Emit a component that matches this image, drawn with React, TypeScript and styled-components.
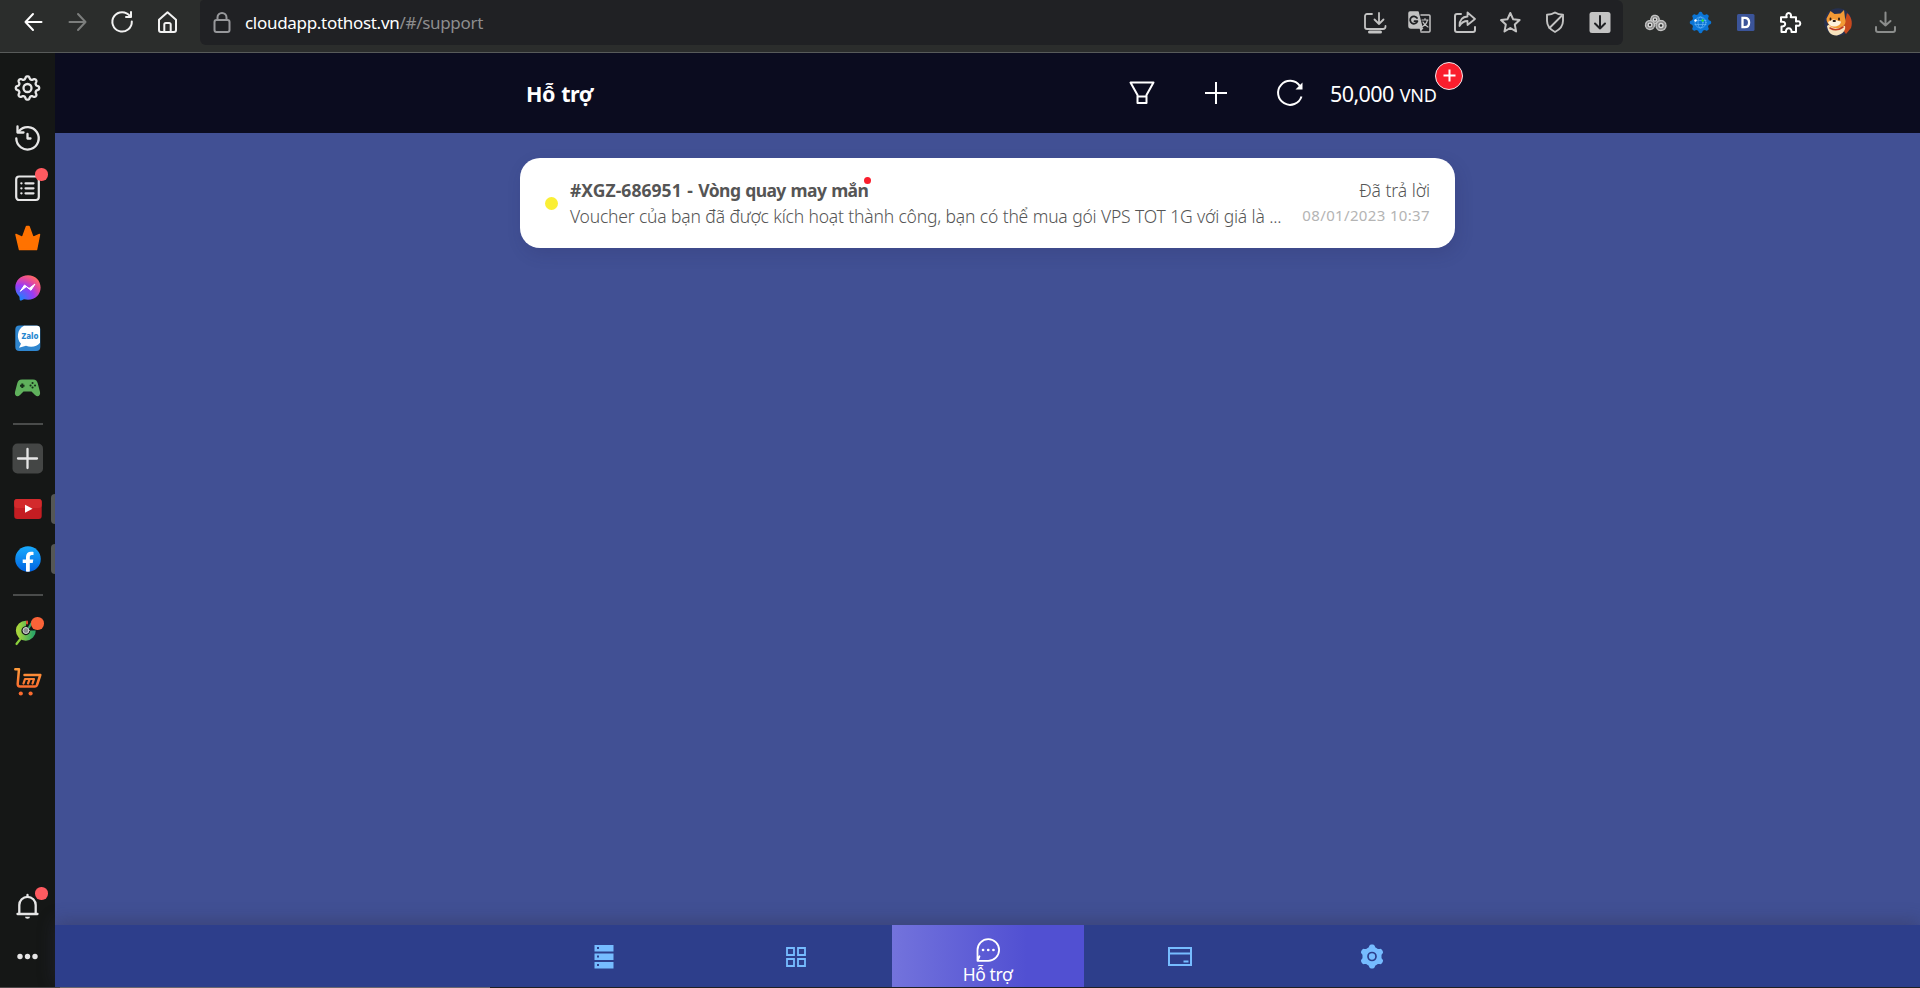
import React from 'react';
import styled, { createGlobalStyle } from 'styled-components';

const Global = createGlobalStyle`
  * { box-sizing: border-box; }
  html, body { margin: 0; padding: 0; overflow: hidden; background: #415094; }
  body { font-family: 'Noto Sans', 'Open Sans', sans-serif; }
`;

const gearPath = (cx: number, cy: number, teeth: number, outer: number, inner: number, sharp = 1.6) => {
  const pts: string[] = [];
  const steps = 144;
  for (let i = 0; i < steps; i++) {
    const a = (i / steps) * Math.PI * 2;
    const wave = Math.tanh(sharp * Math.cos(teeth * a)) / Math.tanh(sharp);
    const r = (outer + inner) / 2 + ((outer - inner) / 2) * wave;
    pts.push(`${(cx + r * Math.sin(a)).toFixed(2)} ${(cy - r * Math.cos(a)).toFixed(2)}`);
  }
  return `M${pts.join('L')}Z`;
};

const Window = styled.div`
  display: flex;
  flex-direction: column;
  width: 1920px;
  height: 988px;
`;

const Toolbar = styled.div`
  display: flex;
  align-items: flex-start;
  flex: none;
  height: 53px;
  padding-left: 11px;
  background: #2b2d2c;
  border-bottom: 1px solid #585b5a;
`;

const ToolGroup = styled.div`
  display: flex;
`;

const ToolButton = styled.div<{ $color?: string }>`
  display: flex;
  align-items: center;
  justify-content: center;
  width: 45px;
  height: 44px;
  color: ${(p) => p.$color || '#c3c3c3'};
`;

const Glyph = styled.svg`
  display: block;
  overflow: visible;
  fill: none;
  stroke-linecap: round;
  stroke-linejoin: round;
`;

const AddressBar = styled.div`
  display: flex;
  width: 1423px;
  height: 45px;
  margin: 0 10px 0 9px;
  background: #202124;
  border-radius: 4px 6px 6px 6px;
`;

const Url = styled.div`
  flex: 1;
  color: #8d8d8e;
  font-size: 17px;
  line-height: 46px;
  letter-spacing: -0.3px;
  span { color: #fff; }
`;

const Body = styled.div`
  display: flex;
  flex: 1;
  min-height: 0;
`;

const Sidebar = styled.div`
  display: flex;
  flex-direction: column;
  flex: none;
  width: 55px;
  padding: 10px 0 5px;
  background: #151716;
`;

const SideItem = styled.div<{ $tab?: boolean }>`
  position: relative;
  display: flex;
  align-items: center;
  justify-content: center;
  flex: none;
  height: 50px;
  color: #e6e6e6;
  ${(p) => p.$tab && `&::after {
    content: '';
    position: absolute;
    right: 0;
    top: 10px;
    width: 4px;
    height: 30px;
    background: #555756;
    border-radius: 4px 0 0 4px;
  }`}
`;

const Dot = styled.span<{ $color?: string; $inner?: boolean }>`
  position: absolute;
  top: ${(p) => (p.$inner ? 11.5 : 5)}px;
  left: ${(p) => (p.$inner ? 31 : 35)}px;
  width: 12.5px;
  height: 12.5px;
  border-radius: 50%;
  background: ${(p) => p.$color || '#ff5a60'};
`;

const Divider = styled.div`
  flex: none;
  width: 30px;
  height: 1.5px;
  margin: 10px 0 9.8px 13px;
  background: #4a4c4b;
`;

const Spacer = styled.div`
  flex: 1;
`;

const AppPane = styled.div`
  display: flex;
  flex-direction: column;
  flex: 1;
  background: #415094;
`;

const Header = styled.div`
  display: flex;
  justify-content: center;
  flex: none;
  height: 80px;
  background: #0b0c1f;
`;

const HeaderInner = styled.div`
  display: flex;
  align-items: center;
  width: 961px;
  padding: 0 29px 0 19px;
  color: #fff;
`;

const Title = styled.h1`
  flex: 1;
  margin: 0;
  font-size: 21.5px;
  font-weight: 700;
  line-height: 80px;
  letter-spacing: -0.45px;
  word-spacing: 1px;
  padding-top: 1px;
`;

const HeaderAction = styled.div`
  display: flex;
  align-items: center;
  justify-content: center;
  width: 74px;
`;

const Balance = styled.div`
  position: relative;
  width: 109px;
  margin-left: 3px;
  padding-top: 2px;
  font-size: 21.5px;
  line-height: 80px;
  white-space: nowrap;
  letter-spacing: -0.6px;
  word-spacing: 1px;
  small { font-size: 18px; letter-spacing: -0.2px; }
`;

const TopUp = styled.div`
  position: absolute;
  left: 105px;
  top: 10px;
  width: 28px;
  height: 28px;
  border: 1.5px solid #f3e9ec;
  border-radius: 50%;
  background: #fa1e2d;
  display: flex;
  align-items: center;
  justify-content: center;
`;

const Content = styled.div`
  flex: 1;
  padding: 25px 0 0;
`;

const Ticket = styled.div`
  display: flex;
  align-items: center;
  width: 935px;
  height: 90px;
  margin: 0 auto;
  padding: 0 25px;
  background: #fff;
  border-radius: 20px;
  box-shadow: 3px 6px 16px rgba(40, 40, 90, 0.18);
  color: #555;
`;

const Status = styled.span`
  flex: none;
  width: 13px;
  height: 13px;
  margin-right: 12px;
  border-radius: 50%;
  background: #faef35;
`;

const TicketMain = styled.div`
  flex: 1;
  min-width: 0;
`;

const Subject = styled.div`
  position: relative;
  width: 297px;
  font-size: 17.5px;
  font-weight: 700;
  line-height: 26px;
  white-space: nowrap;
  letter-spacing: -0.32px;
  word-spacing: 0.9px;
`;

const SubjectCode = styled.span`
  letter-spacing: 0.05px;
`;

const SubjectName = styled.span`
  letter-spacing: -0.6px;
`;

const Unread = styled.span`
  position: absolute;
  left: 293.5px;
  top: 0;
  width: 7px;
  height: 7px;
  border-radius: 50%;
  background: #fa1e2d;
`;

const Excerpt = styled.div`
  font-size: 17.5px;
  font-weight: 300;
  line-height: 26px;
  white-space: nowrap;
  letter-spacing: -0.23px;
  word-spacing: 0.35px;
`;

const TicketMeta = styled.div`
  flex: none;
  text-align: right;
`;

const State = styled.div`
  font-size: 17.5px;
  font-weight: 300;
  line-height: 26px;
  letter-spacing: -0.05px;
`;

const Time = styled.div`
  position: relative;
  top: -1px;
  color: #b4b4b4;
  font-size: 15px;
  line-height: 26px;
  letter-spacing: 0.35px;
`;

const BottomNav = styled.div`
  display: flex;
  justify-content: center;
  flex: none;
  height: 62px;
  padding-left: 1px;
  background: #2d3e8b;
  box-shadow: 0 -4px 16px rgba(50, 50, 80, 0.4);
`;

const NavItem = styled.div<{ $active?: boolean }>`
  display: flex;
  flex-direction: column;
  align-items: center;
  justify-content: ${(p) => (p.$active ? 'flex-start' : 'center')};
  width: 192px;
  padding-top: ${(p) => (p.$active ? 13 : 1)}px;
  color: ${(p) => (p.$active ? '#fff' : '#76bcff')};
  background: ${(p) => (p.$active ? 'linear-gradient(90deg, #7373dc, #5150d2 70%)' : 'none')};
`;

const NavLabel = styled.div`
  padding-right: 1px;
  font-size: 17.5px;
  line-height: 24px;
  letter-spacing: -0.4px;
`;

const Edge = styled.div`
  flex: none;
  height: 1px;
  background: linear-gradient(90deg, #4c4848 0 60px, #6a6870 60px 490px, #1e2024 490px);
`;

type GProps = { w?: number; h?: number; sw?: number; children: React.ReactNode };
const G = ({ w = 25, h = 24, sw = 2, children }: GProps) => (
  <Glyph width={w} height={h} viewBox={`0 0 ${w} ${h}`} stroke="currentColor" strokeWidth={sw}>
    {children}
  </Glyph>
);
const S = (p: { sw?: number; children: React.ReactNode }) => <G w={25} h={26} {...p} />;

const Gears = ({ x, y, r }: { x: number; y: number; r: number }) => (
  <g strokeWidth="1.3">
    <circle cx={x} cy={y} r={r} fill="#8a8a8a" stroke="#c4c4c4" strokeDasharray="2 1" />
    <circle cx={x} cy={y} r={r * 0.4} fill="#2b2d2c" stroke="#dcdcdc" />
  </g>
);

const App = () => (
  <Window>
    <Global />
    <Toolbar>
      <ToolGroup>
        <ToolButton $color="#fff"><G><path d="M20.500 12H4.500M12 4L4.500 12l7.500 8" /></G></ToolButton>
        <ToolButton $color="#7c7e7d"><G><path d="M3.500 12h16M12 4l7.500 8-7.500 8" /></G></ToolButton>
        <ToolButton $color="#f2f2f2"><G>
          <path d="M19 6.200A9.700 9.700 0 1 0 20.800 11.500" /><path d="M20 2v5h-5" />
        </G></ToolButton>
        <ToolButton $color="#f2f2f2"><G>
          <path d="M3 9.700L11.500 2.300L20 9.700V20a2 2 0 0 1-2 2H5a2 2 0 0 1-2-2z" />
          <path d="M8.300 21.500V14.500a1.500 1.500 0 0 1 1.500-1.500h3.400a1.500 1.500 0 0 1 1.500 1.500V21.500" />
        </G></ToolButton>
      </ToolGroup>
      <AddressBar>
        <ToolButton $color="#97989b"><G>
          <rect x="4.500" y="10" width="15" height="12" rx="2" /><path d="M7.500 10V7.500a4.500 4.500 0 0 1 9 0V10" />
        </G></ToolButton>
        <Url><span>cloudapp.tothost.vn</span>/#/support</Url>
        <ToolButton><G sw={1.800}>
          <path d="M9 4H4a2 2 0 0 0-2 2v11a2 2 0 0 0 2 2H20a2.500 2.500 0 0 0 2.500-2.500V16" />
          <path d="M16 3v11M11.500 9.500L16 14l4.500-4.500" /><path d="M6.500 22h11" strokeWidth="3" />
        </G></ToolButton>
        <ToolButton><G sw={1.500}>
          <path d="M13 5h8a1 1 0 0 1 1 1v15a1 1 0 0 1-1 1h-8" />
          <path d="M2 2h8L14 18H3a2 2 0 0 1-2-2V3a1 1 0 0 1 1-1z" fill="#c3c3c3" />
          <path d="M11.500 18l1 4 3-4z" fill="#c3c3c3" stroke="none" />
          <path d="M9 8a3.700 3.700 0 1 0 .4 3.200H6.500" stroke="#202124" strokeWidth="1.800" />
          <path d="M14 10h6M17 8.500V10M19.500 10c-.8 3-3 5.500-5 6.500M15 12c1 2.500 3 4 5 5" strokeWidth="1.200" />
        </G></ToolButton>
        <ToolButton><G>
          <path d="M8 4H4a2 2 0 0 0-2 2v14a2 2 0 0 0 2 2h16a2 2 0 0 0 2-2v-3" />
          <path d="M14.500 2.500L22 9l-7.500 6v-4C11 11 8.500 12.500 6.500 16C6.500 10 9.500 6.800 14.500 6.500z" strokeWidth="1.800" />
        </G></ToolButton>
        <ToolButton><G>
          <path d="M12.300 3l2.900 6.300 6.400.8-4.800 4.500 1.300 6.800-5.800-3.400-5.800 3.400 1.300-6.800L3 10.100l6.400-.8z" />
        </G></ToolButton>
        <ToolButton><G sw={1.900}>
          <path d="M12 2.500c2.500 1.800 5 2.300 8 2.300v6c0 5-3 8.700-8 11.200-5-2.500-8-6.200-8-11.200v-6c3 0 5.500-.5 8-2.300z" /><path d="M18.500 6L6.500 18" />
        </G></ToolButton>
        <ToolButton><G>
          <rect x="1.500" y="2" width="21" height="21" rx="2.500" fill="#c3c3c3" stroke="none" />
          <path d="M12 6v12.500M7 13.500l5 5 5-5" stroke="#202124" />
        </G></ToolButton>
      </AddressBar>
      <ToolGroup>
        <ToolButton><G>
          <Gears x={12} y={9.500} r={4.200} /><Gears x={7} y={15} r={4.500} /><Gears x={18} y={15.500} r={5} />
        </G></ToolButton>
        <ToolButton><G sw={1}>
          <path d={gearPath(12.500, 12.500, 8, 10.700, 8.500)} fill="#0b75d6" stroke="none" />
          <g stroke="#74c0fb" strokeWidth=".6"><circle cx="12.500" cy="12.500" r="5.500" /><ellipse cx="12.500" cy="12.500" rx="2.500" ry="5.500" /><path d="M7 10.500h11M7 14.500h11" /></g>
          <circle cx="7.500" cy="10.500" r="1.200" fill="#fff" stroke="none" /><circle cx="14.700" cy="10.500" r="1.200" fill="#28e62f" stroke="none" />
        </G></ToolButton>
        <ToolButton><G>
          <rect x="4" y="4" width="17.500" height="17" rx="1.500" fill="#3b5499" stroke="none" />
          <path d="M9.500 7.800v9.400h2.300c2.800 0 4.300-1.700 4.300-4.700s-1.500-4.700-4.300-4.700z" stroke="#fff" strokeWidth="2.300" strokeLinejoin="miter" />
        </G></ToolButton>
        <ToolButton $color="#fff"><G>
          <path d="M3 7.200H8.700C7.700 5 9 3 10.700 3s3 2 2 4.200H18v4.300c2.500-1 4.300.3 4.300 2s-1.800 3-4.300 2V22h-4.500c.3-2.300-1-3.700-2.800-3.700S7.700 19.700 8 22H3.500v-5.500c2.300.3 3.700-1 3.700-2.500S5.800 11.200 3 11.800z" />
        </G></ToolButton>
        <ToolButton><G>
          <circle cx="15" cy="12" r="13.800" fill="#26304f" stroke="none" />
          <path d="M24 3c4 3 6 9 4 15l-5 6-3-4z" fill="#c8491c" stroke="none" />
          <path d="M4 16c2-2 6-2 10-1l8 1c1 4-2 8-8 9.500C8 26 5 22 4 16z" fill="#f7e3bd" stroke="none" />
          <path d="M3.500 8.500L7.500 1l4 3 6-.5L21 0l1 8c1.500 4 0 8-4 9.500-5 1.500-10 .5-12-2.500-1.300-2-2.800-4-2.500-6.500z" fill="#f39a35" stroke="none" />
          <path d="M5 12c2-1 3.500-2.500 5.500-2.500s4 1.500 7.500 2c0 3-3.500 5-7 5s-5.500-2-6-4.500z" fill="#fdf1db" stroke="none" />
          <path d="M7 18c5 3 9 2 13-1" stroke="#c13b24" strokeWidth="1.600" />
          <path d="M7.500 8.500v1M16 8.500v1M10.500 11h1.500" stroke="#2a1b16" strokeWidth="1.800" />
        </G></ToolButton>
        <ToolButton $color="#8b8d8c"><G>
          <path d="M17.500 2.500v13M12.500 11l5 4.500 5-4.500M8 17v3a2 2 0 0 0 2 2h15a2 2 0 0 0 2-2v-3" />
        </G></ToolButton>
      </ToolGroup>
    </Toolbar>
    <Body>
      <Sidebar>
        <SideItem><S sw={2.300}><path d={gearPath(12.500, 13, 8, 11.700, 9, 1.300)} /><circle cx="12.500" cy="13" r="4" /></S></SideItem>
        <SideItem><S sw={2.300}><path d="M1.300 13.500A11.200 11.200 0 1 0 4 6" /><path d="M2.500 1.500V7.500H8.500" /><path d="M12.500 9v4.500h3" /></S></SideItem>
        <SideItem><S sw={2.200}>
          <rect x="1.200" y="1.500" width="22.600" height="23.500" rx="3" />
          <path d="M10.500 8.300h8M10.500 13.300h8M10.500 18.300h8M6.300 8.300h.2M6.300 13.300h.2M6.300 18.300h.2" />
        </S><Dot /></SideItem>
        <SideItem><S><path d="M1 9.500L7.500 12.500L11.500 1.500h2.500L18 12.500L24.500 9.500L21.500 24.500h-17z" fill="#ff7200" stroke="#ff7200" strokeWidth="1.500" /></S></SideItem>
        <SideItem><S>
          <defs><radialGradient id="msg" cx=".15" cy="1" r="1.100"><stop offset="0" stopColor="#0a8dff" /><stop offset=".55" stopColor="#9a3bf5" /><stop offset=".8" stopColor="#e4489f" /><stop offset="1" stopColor="#ff6968" /></radialGradient></defs>
          <path d="M13 .3C5.700.3.300 5.600.300 12.500c0 3.600 1.500 6.700 4 8.900.3.300.4 3.300.4 3.300.2.900 1 1 1.600.7l2.700-1.200c1.300.3 2.600.5 4 .5 7.300 0 12.600-5.300 12.600-12.200S20.300.300 13 .300z" fill="url(#msg)" stroke="none" />
          <path d="M5.500 16l4-6 4.500 3.500 6-4.500-4 6.300-4.500-3.500z" fill="#fff" stroke="#fff" strokeWidth="1" />
        </S></SideItem>
        <SideItem><S>
          <rect x=".3" y=".5" width="25" height="25.500" rx="4" fill="#2f86cf" stroke="none" />
          <path d="M13 .8h9a3 3 0 0 1 3 3v14c-3 4-9 5-14 3l-7 2 2-4C1 14 2 4 9 .8z" fill="#fff" stroke="none" />
          <text x="6.500" y="14" fill="#2486d0" stroke="none" fontFamily="Noto Sans, sans-serif" fontWeight="800" fontSize="8.500" textLength="17" lengthAdjust="spacingAndGlyphs">Zalo</text>
        </S></SideItem>
        <SideItem><S>
          <path d="M7 4.500h11c3 0 4 1.500 4.800 4L25 17c.8 4-2.500 5.500-5 3l-3.500-3.500h-8L5 20c-2.500 2.500-5.800 1-5-3L2.200 8.500C3 6 4 4.500 7 4.500z" fill="#5fb15c" stroke="none" />
          <path d="M5 10.700h4.500M7.300 8.500v4.500" stroke="#16301a" strokeLinecap="butt" /><path d="M17.500 8h.1M17.500 12.500h.1M15.500 10.500h.1M20 10.500h.1" stroke="#16301a" />
        </S></SideItem>
        <Divider />
        <SideItem><S sw={2.300}>
          <rect x="-2.500" y="-2.500" width="30.500" height="30" rx="5" fill="#444645" stroke="none" /><path d="M12.500 3v19M3 12.500h19" />
        </S></SideItem>
        <SideItem $tab><S>
          <rect x="-.8" y="3" width="27.500" height="20" rx="3" fill="#c41d22" stroke="none" /><rect x="-.8" y="3" width="27.500" height="9" rx="3" fill="#d32a2c" stroke="none" />
          <path d="M10 8.800l7.500 4L10 16.800z" fill="#fff" stroke="none" />
        </S></SideItem>
        <SideItem $tab><S>
          <defs><linearGradient id="fb" x2="0" y2="1"><stop stopColor="#18acfe" /><stop offset="1" stopColor="#0163e0" /></linearGradient></defs>
          <circle cx="13" cy="13" r="12.800" fill="url(#fb)" stroke="none" />
          <path d="M11 25.600V17H7.700v-3.600H11V10.800c0-3.300 2-5.100 5-5.100 1.300 0 2.500.2 2.500.2v3.200h-1.600c-1.600 0-2.100 1-2.100 2v2.300h3.500L17.700 17h-2.900v8.600a12.800 12.800 0 0 1-3.800 0z" fill="#fff" stroke="none" />
        </S></SideItem>
        <Divider />
        <SideItem><S>
          <defs><linearGradient id="cc" x2="1"><stop stopColor="#a6d43c" /><stop offset="1" stopColor="#2fa866" /></linearGradient></defs>
          <path d="M6.500 19.500L1.500 26" stroke="#8bd13c" strokeWidth="2.200" />
          <path d="M11 5.500A7.200 7.200 0 1 0 18 12.500" stroke="url(#cc)" strokeWidth="5.500" strokeLinecap="butt" />
          <path d="M14 9.500l3.500-6" stroke="#35a765" /><path d="M12 5.500V3.500" stroke="#e24b2e" />
          <circle cx="11" cy="12.500" r="3" fill="#8a9190" stroke="#d7d7d7" strokeWidth="1" />
        </S><Dot $color="#fa6338" $inner /></SideItem>
        <SideItem><S>
          <defs><linearGradient id="cart" gradientUnits="userSpaceOnUse" x1="0" y1="0" x2="0" y2="20"><stop stopColor="#ff9d3c" /><stop offset="1" stopColor="#fa6b2e" /></linearGradient></defs>
          <g stroke="url(#cart)" strokeWidth="2.500">
            <path d="M.3 1.200H4L2.700 16A2.500 2.500 0 0 0 5 18.500H20a2 2 0 0 0 2-1.500L25.300 7H9.500" />
            <path d="M8.500 15.500L10 11H19L17.500 15.500M14.500 11.500L13 15.500" strokeWidth="2.200" />
          </g>
          <circle cx="5.800" cy="25.500" r="2.100" fill="#fa6b2e" stroke="none" /><circle cx="15.600" cy="25.500" r="2.100" fill="#fa6b2e" stroke="none" />
        </S></SideItem>
        <Spacer />
        <SideItem><S sw={2.300}>
          <path d="M2.500 20h20M4.300 19.500V11a8.200 8.200 0 0 1 16.400 0V19.500M12.500 2.500V1" /><path d="M10 22.800h5a2.500 2 0 0 1-5 0z" fill="currentColor" stroke="none" />
        </S><Dot /></SideItem>
        <SideItem><S><g fill="currentColor" stroke="none"><circle cx="5" cy="12.500" r="2.700" /><circle cx="12.500" cy="12.500" r="2.700" /><circle cx="20" cy="12.500" r="2.700" /></g></S></SideItem>
      </Sidebar>
      <AppPane>
        <Header>
          <HeaderInner>
            <Title>Hỗ trợ</Title>
            <HeaderAction><G w={26} h={26}><path d="M1.500 2.500H24.500L17.500 15v8H8.500v-8zM8.500 16.500h9" /></G></HeaderAction>
            <HeaderAction><G w={26} h={26}><path d="M13 2v22M2 13h22" strokeLinecap="butt" /></G></HeaderAction>
            <HeaderAction><G w={26} h={26}><path d="M24.500 16.500A12 12 0 1 1 22.800 5.800" strokeLinecap="butt" /><path d="M25.500 2.500v7h-7z" fill="currentColor" stroke="none" /></G></HeaderAction>
            <Balance>
              50,000 <small>VND</small>
              <TopUp><G w={13} h={13}><path d="M6.500.5v12M.5 6.500h12" strokeLinecap="butt" /></G></TopUp>
            </Balance>
          </HeaderInner>
        </Header>
        <Content>
          <Ticket>
            <Status />
            <TicketMain>
              <Subject>
                <SubjectCode>#XGZ-686951 - </SubjectCode>
                <SubjectName>Vòng quay may mắn</SubjectName>
                <Unread />
              </Subject>
              <Excerpt>Voucher của bạn đã được kích hoạt thành công, bạn có thể mua gói VPS TOT 1G với giá là ...</Excerpt>
            </TicketMain>
            <TicketMeta>
              <State>Đã trả lời</State>
              <Time>08/01/2023 10:37</Time>
            </TicketMeta>
          </Ticket>
        </Content>
        <BottomNav>
          <NavItem>
            <G w={20} h={26}><g fill="currentColor" stroke="none">
              <path fillRule="evenodd" d="M.5 1h19v6.500H.5zM3 3v2h2V3zM.5 9.500h19V16H.5zM3 11.500v2h2v-2zM.5 18h19v6.500H.5zM3 20v2h2v-2z" />
            </g></G>
          </NavItem>
          <NavItem>
            <G w={20} h={20} sw={1.800}><g strokeLinejoin="miter"><path d="M1 1h7v7H1zM12 1h7v7h-7zM1 12h7v7H1zM12 12h7v7h-7z" /></g></G>
          </NavItem>
          <NavItem $active>
            <G w={24} h={24} sw={1.800}>
              <path d="M1.500 22.500V12A10.800 10.800 0 1 1 12.200 22.800H1.500l2-4.500" />
              <path d="M7 12h.1M12.200 12h.1M17.400 12h.1" strokeWidth="2.600" />
            </G>
            <NavLabel>Hỗ trợ</NavLabel>
          </NavItem>
          <NavItem>
            <G w={24} h={20}><g strokeLinejoin="miter" strokeLinecap="butt"><path d="M1 1h22v17H1zM1 6.500h22M15.500 14.500h5" /></g></G>
          </NavItem>
          <NavItem>
            <G w={24} h={24}>
              <path d={gearPath(12, 11.500, 6, 12, 9.500, 2)} fill="currentColor" stroke="none" /><circle cx="12" cy="11.500" r="4" stroke="#2d3e8b" strokeWidth="1.700" />
            </G>
          </NavItem>
        </BottomNav>
      </AppPane>
    </Body>
    <Edge />
  </Window>
);

export default App;
